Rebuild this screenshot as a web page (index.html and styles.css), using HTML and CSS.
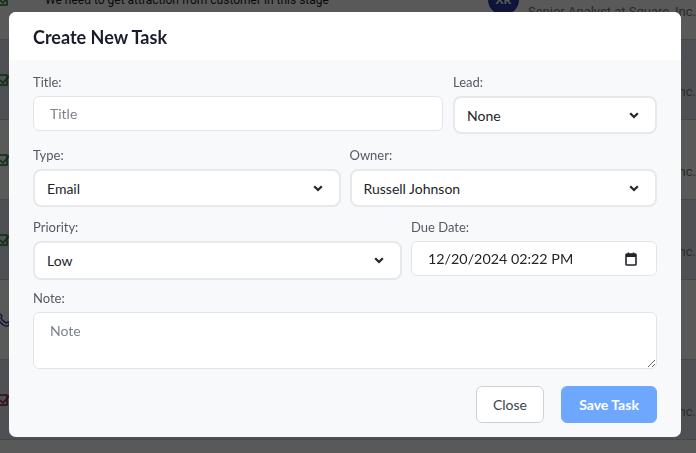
FILE: index.html
```html
<!DOCTYPE html>
<html lang="en">
<head>
<meta charset="utf-8">
<title>Create New Task</title>
<link rel="stylesheet" href="styles.css">
</head>
<body>
<div class="page">
  <div class="row row-light">
    <span class="ico"><svg width="16" height="16" viewBox="0 0 16 16"><path d="M2 3h9v10H2z" fill="none" stroke="#1f7a3a" stroke-width="1.5"/><path d="M4 8l3 3 7-8" fill="none" stroke="#1f7a3a" stroke-width="1.5"/></svg></span>
    <div class="desc">We need to get attraction from customer in this stage</div>
    <div class="person"><span class="avatar">XR</span><span class="ptitle">Senior Analyst at Square, Inc.</span></div>
  </div>
  <div class="row row-dark">
    <span class="ico"><svg width="16" height="16" viewBox="0 0 16 16"><path d="M2 3h9v10H2z" fill="none" stroke="#1f7a3a" stroke-width="1.5"/><path d="M4 8l3 3 7-8" fill="none" stroke="#1f7a3a" stroke-width="1.5"/></svg></span>
    <div class="desc">Follow up with the customer about the proposal</div>
    <div class="person"><span class="avatar">RJ</span><span class="ptitle">Senior Analyst at Square, Inc.</span></div>
  </div>
  <div class="row row-light">
    <span class="ico"><svg width="16" height="16" viewBox="0 0 16 16"><path d="M2 3h9v10H2z" fill="none" stroke="#1f7a3a" stroke-width="1.5"/><path d="M4 8l3 3 7-8" fill="none" stroke="#1f7a3a" stroke-width="1.5"/></svg></span>
    <div class="desc">Send the updated pricing sheet</div>
    <div class="person"><span class="avatar">XR</span><span class="ptitle">Senior Analyst at Square, Inc.</span></div>
  </div>
  <div class="row row-dark">
    <span class="ico"><svg width="16" height="16" viewBox="0 0 16 16"><path d="M2 3h9v10H2z" fill="none" stroke="#1f7a3a" stroke-width="1.5"/><path d="M4 8l3 3 7-8" fill="none" stroke="#1f7a3a" stroke-width="1.5"/></svg></span>
    <div class="desc">Schedule a demo meeting</div>
    <div class="person"><span class="avatar">XR</span><span class="ptitle">Senior Analyst at Square, Inc.</span></div>
  </div>
  <div class="row row-light">
    <span class="ico"><svg width="16" height="16" viewBox="0 0 16 16"><path d="M3 3c1-1 2-1 3 1l-1 2c1 2 3 4 5 5l2-1c2 1 2 2 1 3-2 2-5 1-8-2S1 5 3 3z" fill="none" stroke="#3b2a8a" stroke-width="1.4"/></svg></span>
    <div class="desc">Call the customer</div>
    <div class="person"><span class="avatar">XR</span><span class="ptitle">Senior Analyst at Square.</span></div>
  </div>
  <div class="row row-dark">
    <span class="ico"><svg width="16" height="16" viewBox="0 0 16 16"><path d="M2 3h9v10H2z" fill="none" stroke="#8a1f3a" stroke-width="1.5"/><path d="M4 8l3 3 7-8" fill="none" stroke="#8a1f3a" stroke-width="1.5"/></svg></span>
    <div class="desc">Close the deal</div>
    <div class="person"><span class="avatar">XR</span><span class="ptitle">Senior Analyst at Square, Inc.</span></div>
  </div>
  <div class="row-end"></div>
</div>

<div class="backdrop"></div>

<div class="modal">
  <div class="modal-header">
    <h2 class="modal-title">Create New Task</h2>
  </div>
  <div class="modal-body">
    <div class="grid g-21 r1">
      <div class="field">
        <label class="lbl">Title:</label>
        <input class="input input-title" type="text" placeholder="Title">
      </div>
      <div class="field">
        <label class="lbl">Lead:</label>
        <div class="select"><span>None</span><svg class="chev" width="10" height="7" viewBox="0 0 10 7"><path d="M1.2 1.2L5 5l3.8-3.8" fill="none" stroke="#212529" stroke-width="2.2"/></svg></div>
      </div>
    </div>
    <div class="grid g-11 r2">
      <div class="field">
        <label class="lbl">Type:</label>
        <div class="select"><span>Email</span><svg class="chev" width="10" height="7" viewBox="0 0 10 7"><path d="M1.2 1.2L5 5l3.8-3.8" fill="none" stroke="#212529" stroke-width="2.2"/></svg></div>
      </div>
      <div class="field">
        <label class="lbl">Owner:</label>
        <div class="select"><span>Russell Johnson</span><svg class="chev" width="10" height="7" viewBox="0 0 10 7"><path d="M1.2 1.2L5 5l3.8-3.8" fill="none" stroke="#212529" stroke-width="2.2"/></svg></div>
      </div>
    </div>
    <div class="grid g-32 r3">
      <div class="field">
        <label class="lbl">Priority:</label>
        <div class="select sel-prio"><span>Low</span><svg class="chev" width="10" height="7" viewBox="0 0 10 7"><path d="M1.2 1.2L5 5l3.8-3.8" fill="none" stroke="#212529" stroke-width="2.2"/></svg></div>
      </div>
      <div class="field">
        <label class="lbl">Due Date:</label>
        <div class="input date"><span>12/20/2024&nbsp;02:22&nbsp;PM</span><svg class="cal" width="12" height="14" viewBox="0 0 12 14"><rect x="1" y="2" width="10" height="11" rx="0.8" fill="none" stroke="#212529" stroke-width="1.6"/><rect x="1" y="2" width="10" height="3" fill="#212529"/><path d="M3.5 0.5v2M8.5 0.5v2" stroke="#212529" stroke-width="1.4"/></svg></div>
      </div>
    </div>
    <div class="field r4">
      <label class="lbl">Note:</label>
      <textarea class="input note" placeholder="Note"></textarea>
    </div>
    <div class="actions">
      <button class="btn btn-close" type="button">Close</button>
      <button class="btn btn-save" type="button">Save Task</button>
    </div>
  </div>
</div>
</body>
</html>
```

FILE: styles.css
```css
* { box-sizing: border-box; }
html, body { margin: 0; padding: 0; }
body {
  width: 696px;
  height: 453px;
  overflow: hidden;
  font-family: "Lato", "Segoe UI", "Liberation Sans", sans-serif;
  background: #ffffff;
}

/* background page */
.page {
  margin-top: -40px;
  display: flex;
  flex-direction: column;
}
.row {
  height: 80px;
  flex-shrink: 0;
  display: flex;
  align-items: center;
  border-bottom: 1px solid #c9ccd4;
  color: #222;
  font-size: 12px;
}
.row-light { background: #ffffff; }
.row-dark { background: #e3e6f0; }
.row-end { height: 13px; background: #ffffff; }
.ico { width: 16px; margin-left: -4px; display: flex; }
.desc { margin-left: 33px; width: 445px; white-space: nowrap; font-family: "Roboto", sans-serif; }
.person {
  display: flex;
  align-items: flex-start;
  gap: 9px;
  padding-top: 8px;
  height: 47px;
}
.avatar {
  width: 31px; height: 31px; border-radius: 50%;
  flex-shrink: 0;
  background: #2b3aa8; color: #fff; font-size: 12px; font-weight: 700;
  display: flex; align-items: center; justify-content: center;
}
.ptitle {
  white-space: nowrap;
  color: #777;
  font-family: "Roboto", sans-serif;
  font-size: 13px;
  line-height: 17px;
  margin-top: 19px;
}

.backdrop {
  position: fixed;
  inset: 0;
  background: rgba(0, 0, 0, 0.65);
}

/* modal */
.modal {
  position: absolute;
  left: 9px;
  top: 12px;
  width: 672px;
  height: 425px;
  border-radius: 7px;
  overflow: hidden;
  background: #f8f9fb;
  display: flex;
  flex-direction: column;
}
.modal-header {
  flex-shrink: 0;
  height: 48px;
  background: #ffffff;
  padding: 0 24px;
  display: flex;
  align-items: center;
}
.modal-title {
  margin: 0;
  font-size: 18px;
  font-weight: 700;
  color: #1b1c2b;
  padding-top: 2px;
}
.modal-body {
  padding: 14px 24px 14px;
  display: flex;
  flex-direction: column;
}
.grid { display: grid; gap: 9px; align-items: start; }
.g-21 { grid-template-columns: 410px 1fr; gap: 10px; }
.g-11 { grid-template-columns: 1fr 1fr; }
.g-32 { grid-template-columns: 369px 1fr; }
.r1 { margin-bottom: 13px; }
.r2 { margin-bottom: 12px; }
.r3 { margin-bottom: 10px; }
.r4 { margin-bottom: 17px; }
.field { display: flex; flex-direction: column; }
.lbl {
  font-size: 13px;
  line-height: 16px;
  color: #555a62;
  margin-bottom: 6px;
}
.input {
  height: 35px;
  border: 1px solid #e2e4e9;
  border-radius: 6px;
  background: #fff;
  font-family: inherit;
  font-size: 14px;
  color: #212529;
  padding: 0 16px;
  outline: none;
}
.input::placeholder { color: #7c818a; }
.select {
  position: relative;
  height: 38px;
  border: 2px solid #e6e8ec;
  border-radius: 8px;
  background: #fff;
  font-size: 14px;
  color: #212529;
  padding: 0 12px;
  display: flex;
  align-items: center;
}
.sel-prio { height: 39px; }
.chev { position: absolute; right: 16px; top: 14px; }
.date {
  display: flex;
  align-items: center;
  justify-content: space-between;
  padding: 0 19px 0 16px;
  font-size: 14.3px;
}
.note {
  height: 57px;
  padding-top: 9px;
  resize: vertical;
}
.actions {
  display: flex;
  justify-content: flex-end;
  gap: 17px;
}
.btn {
  height: 37px;
  border-radius: 6px;
  font-family: inherit;
  font-size: 14px;
  padding: 0;
}
.btn-close {
  width: 68px;
  background: #fff;
  border: 1px solid #ccd1d8;
  color: #3d424a;
}
.btn-save {
  width: 96px;
  background: #6ea8fe;
  border: 1px solid #6ea8fe;
  color: #fff;
  font-weight: 700;
}
```
